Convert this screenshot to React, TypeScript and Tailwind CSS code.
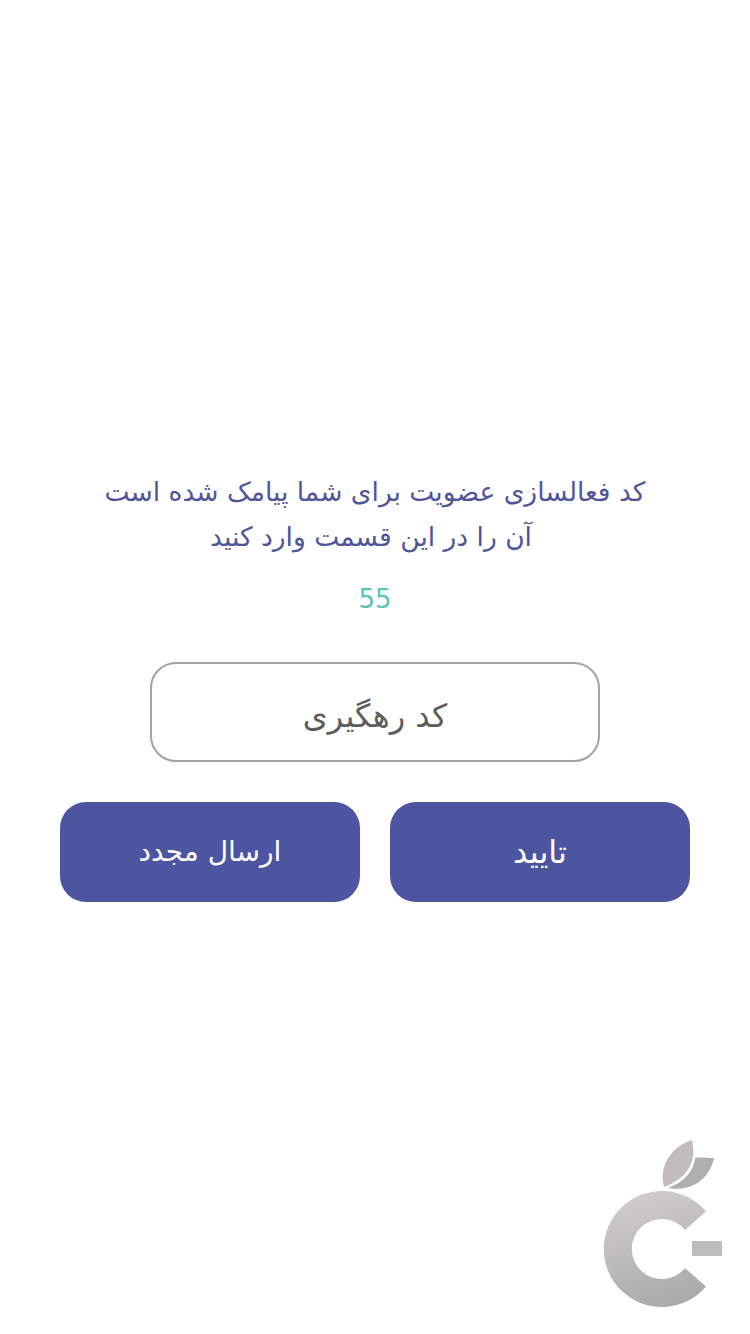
const fontStack = "font-['DejaVu_Sans',sans-serif]";

function Logo() {
  return (
    <svg className="absolute left-[600px] top-[1136px]" width="126" height="174" viewBox="600 1136 126 174" fill="none">
      <defs>
        <linearGradient id="logoBody" x1="640" y1="1192" x2="680" y2="1306" gradientUnits="userSpaceOnUse">
          <stop offset="0" stopColor="#cfcccc" />
          <stop offset="1" stopColor="#a9a9a9" />
        </linearGradient>
      </defs>
      <path d="M692 1140C672 1146 658 1166 664 1187C684 1180 698 1164 692 1140Z" fill="#c2bdbd" />
      <path d="M714 1158C708 1158 701 1157 695 1158C694 1172 682 1183 668 1188C688 1192 709 1182 714 1158Z" fill="#b0afb0" />
      <path
        d="M706 1211.500A58 58 0 1 0 706 1286.500L685 1268A30 30 0 1 1 685 1230Z"
        fill="url(#logoBody)"
      />
      <rect x="692" y="1241" width="30" height="15" fill="#bcbcbc" />
    </svg>
  );
}

export default function App() {
  return (
    <main dir="rtl" className={`relative min-h-[1334px] w-[750px] overflow-hidden bg-white pt-[469px] ${fontStack}`}>
      <p className="text-center text-[26.5px] leading-[45px] text-[#4f5598]">
        <span className="block">کد فعالسازی عضویت برای شما پیامک شده است</span>
        <span className="block pr-[8px]">آن را در این قسمت وارد کنید</span>
      </p>
      <p className="mt-[22px] text-center text-[26px] leading-[36px] text-[#5cc4b8]">55</p>
      <div className="mt-[45px] flex justify-center">
        <input
          dir="rtl"
          placeholder="کد رهگیری"
          className="h-[100px] w-[450px] rounded-[26px] border-2 border-[#a3a3a3] bg-white pt-2 text-center text-[32px] outline-none placeholder:text-[#5c5c5c]"
        />
      </div>
      <div className="mt-[40px] flex justify-center gap-[30px]">
        <button type="button" className="h-[100px] w-[300px] rounded-[26px] bg-[#4e55a0] text-[32px] text-white">
          تایید
        </button>
        <button type="button" className="h-[100px] w-[300px] rounded-[26px] bg-[#4e55a0] text-[28px] text-white">
          ارسال مجدد
        </button>
      </div>
      <Logo />
    </main>
  );
}
